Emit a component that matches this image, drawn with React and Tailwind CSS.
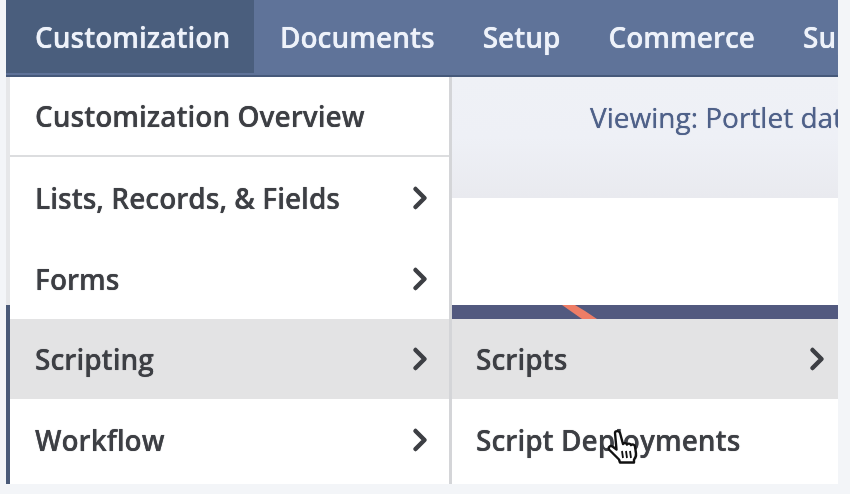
import { ChevronRight } from 'lucide-react'

const NAV_ITEMS = ['Documents', 'Setup', 'Commerce', 'Support']

const MENU_ITEMS = [
  { label: 'Lists, Records, & Fields', height: 'h-[81px]' },
  { label: 'Forms', height: 'h-[81px]' },
  { label: 'Scripting', height: 'h-[80px]', active: true },
  { label: 'Workflow', height: 'h-[85px] pb-[4px]' },
]

function MenuRow({ label, height, active, pad = 'pl-[25px]', arrow = 'pr-[11px]' }) {
  return (
    <div className={`flex items-center justify-between ${height} ${pad} ${arrow} ${active ? 'bg-[#e3e3e4]' : ''}`}>
      <span>{label}</span>
      <ChevronRight size={36} strokeWidth={3} className="text-[#3d3f44]" />
    </div>
  )
}

// NetSuite style hand cursor
function HandCursor() {
  return (
    <svg width="36" height="40" viewBox="0 0 36 40" className="absolute left-[606px] top-[428px]">
      <path
        d="M9 5c0-2.500 4-2.500 5 0l3 11c1-1.500 3.500-1 4 .5 1-1.500 3.500-1 4 .5 1.500-1 3.500-.5 4 1.500l1 7c.3 3-1 5-2 6v3H14l-1-3-9.500-9.500c-2-2.500.5-5 3-3.500l4 3z"
        fill="#fff"
        stroke="#111"
        strokeWidth="2.400"
        strokeLinejoin="round"
      />
      <path d="M16 23l1 7M20 23l1 7M24 23l1 7" stroke="#111" strokeWidth="1.800" fill="none" />
    </svg>
  )
}

export default function App() {
  return (
    <div className="relative h-[494px] w-[850px] overflow-hidden bg-[#f3f5f8] font-['Open_Sans',sans-serif] text-[28px] font-semibold text-[#3d3f44] [text-shadow:0_0_0.7px_currentColor] blur-[0.6px]">
      <div className="ml-1.5 flex h-[484px] w-[832px] flex-col overflow-hidden">
        {/* Top nav */}
        <div className="flex h-[77px] shrink-0 items-center whitespace-nowrap border-b-2 border-[#46597a] bg-[#5f7399] pb-[2px] text-[#eef2fa]">
          <div className="flex h-full w-[248px] shrink-0 items-center bg-[#4a5e7d] pl-[29px]">Customization</div>
          <div className="flex gap-[48px] pl-[26px]">
            {NAV_ITEMS.map((item) => (
              <span key={item}>{item}</span>
            ))}
          </div>
        </div>

        <div className="flex min-h-0 flex-1">
          {/* First level menu */}
          <div className="flex w-[446px] shrink-0 border-r-[3px] border-[#d4d5d8] bg-white">
            <div className="flex w-1 shrink-0 flex-col">
              <div className="h-[228px] bg-[#e6e7e9]" />
              <div className="flex-1 bg-[#4a5a78]" />
            </div>
            <div className="min-w-0 flex-1">
              <div className="flex h-[80px] items-center border-b-2 border-[#dcdddf] pl-[25px]">Customization Overview</div>
              {MENU_ITEMS.map((item) => (
                <MenuRow key={item.label} {...item} />
              ))}
            </div>
          </div>

          {/* Page content and second level menu */}
          <div className="min-w-0 flex-1 overflow-hidden">
            <div className="flex h-[121px] items-start whitespace-nowrap bg-linear-to-b from-[#eff1f6] via-[#eef0f6] to-[#e9eaef] pl-[138px] pt-[19px] font-normal text-[#4f6189]">
              Viewing: Portlet data
            </div>
            <div className="h-[107px] bg-white" />
            <div className="relative h-[14px] overflow-hidden bg-[#52597f]">
              <svg width="50" height="14" viewBox="0 0 50 14" className="absolute left-[108px] top-0">
                <path d="M2 0h13l10 6 12 8H22L12 7z" fill="#ee7d66" />
              </svg>
            </div>
            <MenuRow label="Scripts" height="h-[80px]" active pad="pl-6" arrow="pr-[3px]" />
            <div className="flex h-[85px] items-center bg-white pb-[4px] pl-6">Script Deployments</div>
          </div>
        </div>
      </div>
      <HandCursor />
    </div>
  )
}
